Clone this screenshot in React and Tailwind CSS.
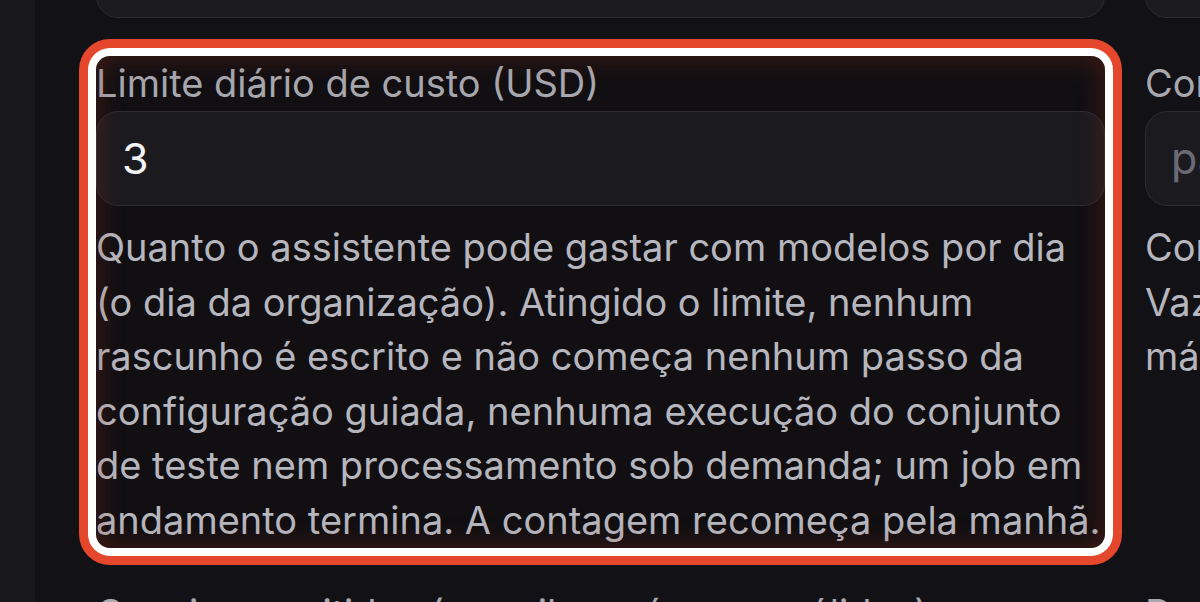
import React from 'react';

const font = { fontFamily: 'Inter, "Noto Sans", sans-serif' };

// Campo simples: rótulo, input e texto de ajuda
const Field = ({ label, value, placeholder, help, highlight }) => (
    <div className={`relative flex flex-col ${highlight ? 'rounded-[14px] bg-[#110f12] shadow-[0_0_0_8px_#ffffff,0_0_0_17px_#e4472b]' : ''}`}>
        <label className="text-[38px] leading-[55px] text-[#a7a7ae] whitespace-nowrap">{label}</label>
        <div className="h-[95px] rounded-[22px] border-[1.5px] border-[#2d2c32] bg-[#1b1a1f] px-[25px] flex items-center">
            {value ? (
                <span className="text-[43px] text-[#f4f4f5]">{value}</span>
            ) : (
                <span className="text-[43px] text-[#6b6b73] whitespace-nowrap">{placeholder}</span>
            )}
        </div>
        <p className="mt-[14px] text-[38px] leading-[54.6px] text-[#b6b6be]">{help}</p>
        {highlight && (
            <div className="pointer-events-none absolute inset-0 rounded-[14px] shadow-[inset_0_0_28px_rgba(150,50,28,0.38)]" />
        )}
    </div>
);

const App = () => {
    return (
        <div className="flex h-[602px] w-[1200px] overflow-hidden bg-[#121115]" style={font}>
            {/* Sidebar */}
            <aside className="w-[35px] shrink-0 bg-[#18181b]" />

            {/* Conteúdo */}
            <main className="flex-1 overflow-hidden pl-[61px]">
                <div className="grid w-[2060px] grid-cols-[1009px_1009px] gap-x-[40px] gap-y-[38px] -mt-[76px]">
                    {/* linha anterior (só o input aparece) */}
                    <div className="h-[94px] rounded-[22px] border-[1.5px] border-[#2d2c32] bg-[#1b1a1f]" />
                    <div className="h-[94px] rounded-[22px] border-[1.5px] border-[#2d2c32] bg-[#1b1a1f]" />

                    <Field
                        highlight
                        label="Limite diário de custo (USD)"
                        value="3"
                        help="Quanto o assistente pode gastar com modelos por dia (o dia da organização). Atingido o limite, nenhum rascunho é escrito e não começa nenhum passo da configuração guiada, nenhuma execução do conjunto de teste nem processamento sob demanda; um job em andamento termina. A contagem recomeça pela manhã."
                    />
                    <Field
                        label="Conta de envio padrão"
                        placeholder="padrao@empresa.com"
                        help={
                            <>
                                Conta usada para enviar os rascunhos aprovados.
                                <br />
                                Vazio usa a conta principal da organização.
                                <br />
                                máximo de uma conta por vez.
                            </>
                        }
                    />

                    <div className="flex flex-col">
                        <label className="text-[38px] leading-[55px] text-[#a7a7ae] whitespace-nowrap">Canais permitidos (e-mails e números válidos)</label>
                    </div>
                    <div className="flex flex-col">
                        <label className="text-[38px] leading-[55px] text-[#a7a7ae] whitespace-nowrap">Domínios bloqueados</label>
                    </div>
                </div>
            </main>
        </div>
    );
};

export default App;
